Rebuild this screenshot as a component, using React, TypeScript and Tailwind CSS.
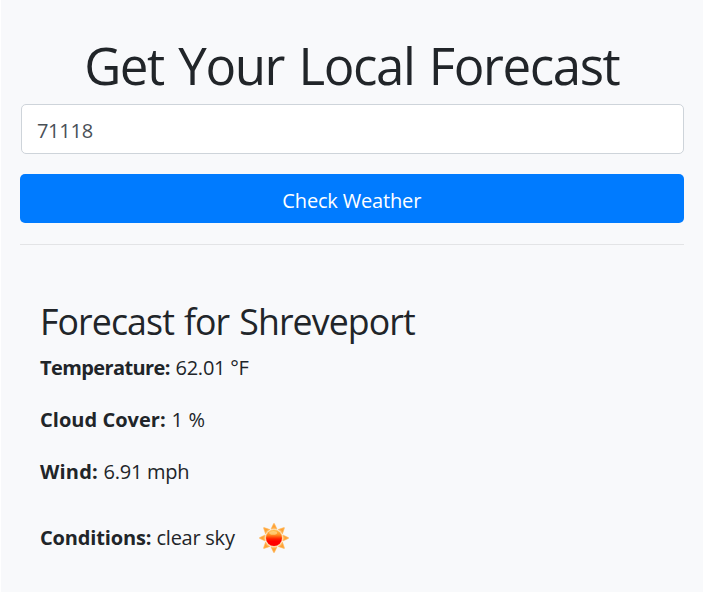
import type { ReactNode } from 'react';

function Row({ label, labelClass, value, valueClass, className, children }: {
  label: string;
  labelClass: string;
  value: string;
  valueClass: string;
  className: string;
  children?: ReactNode;
}) {
  return (
    <div className={`flex items-center whitespace-pre ${className}`}>
      <strong className={`shrink-0 font-bold ${labelClass}`}>{label}</strong>
      <span className={valueClass}>{value}</span>
      {children}
    </div>
  );
}

function Sun() {
  return (
    <svg width="30" height="30" viewBox="0 0 30 30" className="ml-[23px]" aria-label="clear sky">
      <defs>
        <linearGradient id="disc" x1="0" y1="0" x2="0" y2="1">
          <stop offset="0" stopColor="#ffc04a" />
          <stop offset="0.3" stopColor="#ff9020" />
          <stop offset="0.55" stopColor="#ff2400" />
          <stop offset="0.7" stopColor="#ff0000" />
          <stop offset="1" stopColor="#ff0000" />
        </linearGradient>
        <radialGradient id="ray" gradientUnits="userSpaceOnUse" cx="15" cy="15" r="15">
          <stop offset="0.55" stopColor="#ffc880" />
          <stop offset="0.75" stopColor="#ffa030" />
          <stop offset="1" stopColor="#ffb050" />
        </radialGradient>
      </defs>
      {[0, 45, 90, 135, 180, 225, 270, 315].map((a) => (
        <path key={a} d="M11.9 6.2 L14.6 0.6 Q15 0 15.4 0.6 L18.1 6.2 Q15 5.2 11.9 6.2Z" fill="url(#ray)" stroke="#ffb656" strokeWidth="0.5" transform={`rotate(${a} 15 15)`} />
      ))}
      <circle cx="15" cy="15" r="8.9" fill="#ffd49a" />
      <circle cx="15" cy="15" r="8" fill="url(#disc)" />
      <ellipse cx="14.2" cy="9.9" rx="4" ry="1.8" fill="#ffe29a" opacity="0.6" />
    </svg>
  );
}

export default function App() {
  return (
    <div className="h-[594px] w-[704px] bg-white pr-px pb-[2px] pl-px font-['Open_Sans','Noto_Sans',sans-serif] text-[20px] leading-[30px] font-normal text-[#212529]">
      <main className="flex h-full flex-col bg-[#f8f9fb] pr-[19.5px] pl-[19px]">
        <h1 className="mt-[35px] h-[60px] text-center text-[51px] leading-[60px] font-[390] tracking-[-1.4px] whitespace-nowrap [word-spacing:2.6px]">
          Get Your Local Forecast
        </h1>
        <input
          defaultValue="71118"
          className="mt-[9px] ml-[0.5px] h-[49.5px] shrink-0 rounded-[5px] border border-[#ced4da] bg-white px-[15.4px] pt-[4px] tracking-[-0.24px] text-[#495057] outline-none"
        />
        <button className="mt-[20.5px] h-[49px] w-full shrink-0 rounded-[5px] bg-[#007bff] pt-[5px] tracking-[-0.17px] text-white">
          Check Weather
        </button>
        <hr className="mt-[21px] border-t border-[#e3e4e6]" />
        <section className="mt-[56px] pl-[20px]">
          <h3 className="h-[40px] text-[35.7px] leading-[40px] font-[380] tracking-[-0.9px] whitespace-nowrap [word-spacing:1.6px]">
            Forecast for Shreveport
          </h3>
          <Row className="mt-[12px] h-[30px]" label="Temperature:" labelClass="w-[135.5px] tracking-[-0.6px]" value="62.01 °F" valueClass="tracking-[-0.25px]" />
          <Row className="mt-[22px] h-[30px]" label="Cloud Cover:" labelClass="w-[131.5px] tracking-[0.03px]" value="1 %" valueClass="tracking-[0.2px]" />
          <Row className="mt-[22px] h-[30px]" label="Wind:" labelClass="w-[63.5px] tracking-[0.2px]" value="6.91 mph" valueClass="tracking-[-0.25px]" />
          <Row className="mt-[36px] h-[30px]" label="Conditions:" labelClass="w-[116.5px] tracking-[-0.15px]" value="clear sky" valueClass="w-[79px] tracking-[-0.25px]">
            <Sun />
          </Row>
        </section>
      </main>
    </div>
  );
}
